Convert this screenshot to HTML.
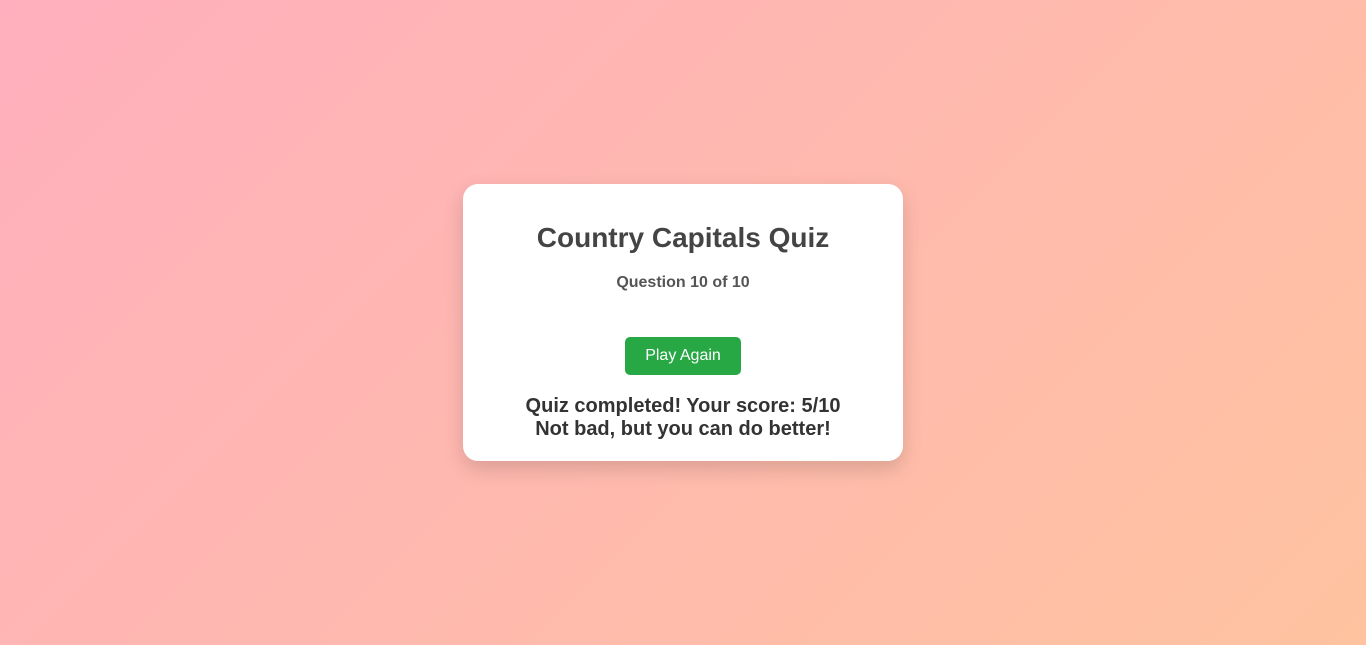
<!DOCTYPE html>
<html><head><style>
html,body{margin:0;height:645px;width:1366px;overflow:hidden}
body{background:linear-gradient(135deg,#ffafbd,#ffc3a0);font-family:"Liberation Sans",Arial,sans-serif;position:relative}
.card{position:absolute;left:463px;top:184px;width:440px;height:277px;background:#fff;border-radius:15px;box-shadow:0 8px 20px rgba(0,0,0,0.15);text-align:center}
h1{margin:0;position:absolute;top:37px;width:100%;font-size:28px;color:#444;line-height:34px}
.q{position:absolute;top:89px;width:100%;font-size:16px;font-weight:bold;color:#555;line-height:20px}
.btn{position:absolute;left:162px;top:153px;width:116px;height:38px;background:#28a745;color:#fff;border-radius:5px;font-size:16px;line-height:38px}
.r{position:absolute;top:211px;width:100%;font-size:20px;font-weight:bold;color:#333;line-height:23px}
</style></head><body>
<div class="card">
<h1>Country Capitals Quiz</h1>
<div class="q">Question 10 of 10</div>
<div class="btn">Play Again</div>
<div class="r">Quiz completed! Your score: 5/10<br>Not bad, but you can do better!</div>
</div>
</body></html>
